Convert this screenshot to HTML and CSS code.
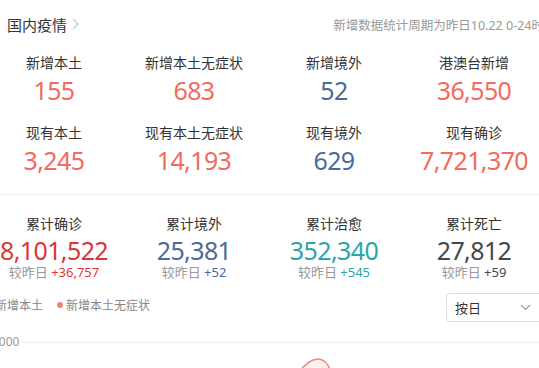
FILE: index.html
```html
<!DOCTYPE html>
<html lang="zh-CN">
<head>
  <meta charset="UTF-8">
  <title>国内疫情</title>
  <meta name="viewport" content="width=device-width, initial-scale=1.0">
  <link rel="stylesheet" href="styles.css">
</head>
<body>

  <div class="page">
    <header class="head">
      <h2 class="title">国内疫情
        <svg class="title-arrow" width="7" height="12" viewBox="0 0 7 12"><path d="M1 1l5 5-5 5" fill="none" stroke="#c8c8c8" stroke-width="1.2"/></svg>
      </h2>
      <span class="note">新增数据统计周期为昨日10.22 0-24时</span>
    </header>

    <section class="stats">
      <div class="stat"><div class="label">新增本土</div><div class="num coral">155</div></div>
      <div class="stat"><div class="label">新增本土无症状</div><div class="num coral">683</div></div>
      <div class="stat"><div class="label">新增境外</div><div class="num blue">52</div></div>
      <div class="stat"><div class="label">港澳台新增</div><div class="num coral">36,550</div></div>

      <div class="stat"><div class="label">现有本土</div><div class="num coral">3,245</div></div>
      <div class="stat"><div class="label">现有本土无症状</div><div class="num coral">14,193</div></div>
      <div class="stat"><div class="label">现有境外</div><div class="num blue">629</div></div>
      <div class="stat"><div class="label">现有确诊</div><div class="num coral">7,721,370</div></div>
    </section>

    <section class="stats totals">
      <div class="stat">
        <div class="label">累计确诊</div><div class="num red">8,101,522</div>
        <div class="sub">较昨日 <span class="red">+36,757</span></div>
      </div>
      <div class="stat">
        <div class="label">累计境外</div><div class="num blue">25,381</div>
        <div class="sub">较昨日 <span class="blue">+52</span></div>
      </div>
      <div class="stat">
        <div class="label">累计治愈</div><div class="num teal">352,340</div>
        <div class="sub">较昨日 <span class="teal">+545</span></div>
      </div>
      <div class="stat">
        <div class="label">累计死亡</div><div class="num dark">27,812</div>
        <div class="sub">较昨日 <span class="dark">+59</span></div>
      </div>
    </section>

    <div class="chart-bar">
      <ul class="legend">
        <li><i class="dot dot-blue"></i>新增本土</li>
        <li><i class="dot dot-coral"></i>新增本土无症状</li>
      </ul>
      <div class="select">
        <span>按日</span>
        <svg width="11" height="7" viewBox="0 0 11 7"><path d="M1 1l4.5 4.5L10 1" fill="none" stroke="#999" stroke-width="1.1"/></svg>
      </div>
    </div>

    <svg class="chart" width="560" height="40" viewBox="0 0 560 40">
      <text x="8" y="12" class="axis">4000</text>
      <line x1="38" y1="8.5" x2="560" y2="8.5" stroke="#eeeeee"/>
      <path d="M312 40 C318 31 325 25 334 25 C340 25 344 30 348 40 Z" fill="#fdf0f0"/>
      <path d="M314 40 C320 31 326 25 334 25 C340 25 344 30 347 37" fill="none" stroke="#f0867a" stroke-width="1.5"/>
    </svg>
  </div>

</body>
</html>
```

FILE: styles.css
```css
body {
  margin: 0;
  padding: 0;
  background-color: #fff;
  font-family: "Noto Sans", "Noto Sans CJK SC", sans-serif;
  color: #333;
  overflow: hidden;
}

.page {
  width: 560px;
  margin-left: -16px;
}

.head {
  height: 48px;
  display: flex;
  align-items: center;
  justify-content: space-between;
  padding-left: 23px;
}

.title {
  margin: 0;
  font-size: 15px;
  font-weight: normal;
  color: #333;
  display: flex;
  align-items: center;
  gap: 5px;
}

.note {
  font-size: 12.5px;
  color: #999;
  white-space: nowrap;
  margin-right: 0;
}

.stats {
  display: grid;
  grid-template-columns: repeat(4, 140px);
  row-gap: 18px;
  padding: 5px 0 19px;
  border-bottom: 1px solid #eeeeee;
}

.totals {
  border-bottom: none;
  padding: 19px 0 0;
}

.stat {
  text-align: center;
}

.label {
  font-size: 14px;
  line-height: 20px;
  color: #333;
}

.num {
  margin-top: 2px;
  font-size: 25px;
  line-height: 30px;
  letter-spacing: -0.6px;
}

.totals .num {
  line-height: 28px;
}

.sub {
  font-size: 13px;
  line-height: 16px;
  color: #999;
}

.coral { color: #f26b5d; }
.blue { color: #4c6b97; }
.red { color: #dc363b; }
.teal { color: #2ba5aa; }
.dark { color: #44474d; }

.chart-bar {
  display: flex;
  align-items: center;
  justify-content: space-between;
  margin-top: 13px;
}

.legend {
  list-style: none;
  margin: 0;
  padding: 0 0 0 2px;
  display: flex;
  gap: 14px;
  font-size: 12px;
  color: #888;
  margin-top: -5px;
}

.legend li {
  display: flex;
  align-items: center;
  gap: 3px;
}

.dot {
  width: 6px;
  height: 6px;
  border-radius: 50%;
}

.dot-blue { background-color: #4c6b97; }
.dot-coral { background-color: #f0867a; }

.select {
  width: 98px;
  height: 29px;
  box-sizing: border-box;
  border: 1px solid #dcdcdc;
  border-radius: 4px;
  display: flex;
  align-items: center;
  justify-content: space-between;
  padding: 0 12px 0 8px;
  font-size: 13px;
  color: #333;
}

.chart {
  display: block;
  margin-top: 12px;
}

.axis {
  font-size: 12px;
  fill: #999;
  font-family: "Noto Sans", sans-serif;
}
```
